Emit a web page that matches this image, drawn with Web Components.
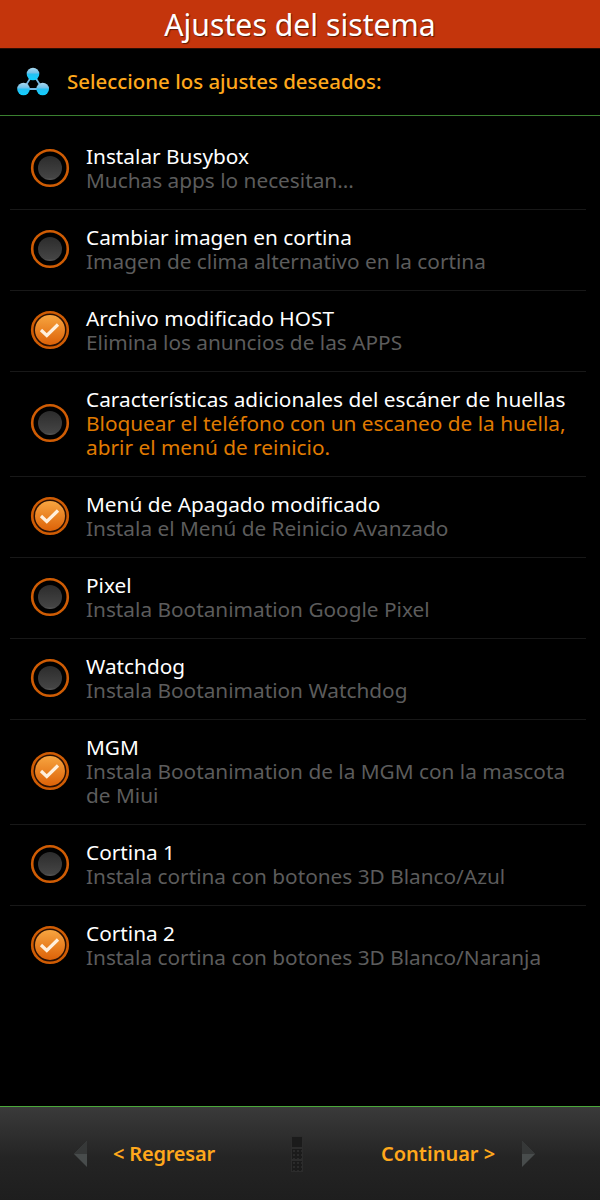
<!DOCTYPE html>
<html>
<head>
<meta charset="utf-8">
<style>
  html, body { margin: 0; height: 100%; background: #000; }
  body { font-family: "Noto Sans", "Open Sans", sans-serif; }
</style>
</head>
<body>
<setup-screen>
  <title-bar slot="title">Ajustes del sistema</title-bar>
  <sub-header slot="sub">Seleccione los ajustes deseados:</sub-header>
  <option-item title="Instalar Busybox">Muchas apps lo necesitan...</option-item>
  <option-item title="Cambiar imagen en cortina">Imagen de clima alternativo en la cortina</option-item>
  <option-item title="Archivo modificado HOST" checked>Elimina los anuncios de las APPS</option-item>
  <option-item title="Características adicionales del escáner de huellas" warn>Bloquear el teléfono con un escaneo de la huella, abrir el menú de reinicio.</option-item>
  <option-item title="Menú de Apagado modificado" checked>Instala el Menú de Reinicio Avanzado</option-item>
  <option-item title="Pixel">Instala Bootanimation Google Pixel</option-item>
  <option-item title="Watchdog">Instala Bootanimation Watchdog</option-item>
  <option-item title="MGM" checked>Instala Bootanimation de la MGM con la mascota de Miui</option-item>
  <option-item title="Cortina 1">Instala cortina con botones 3D Blanco/Azul</option-item>
  <option-item title="Cortina 2" checked last>Instala cortina con botones 3D Blanco/Naranja</option-item>
  <nav-bar slot="nav" back="&lt; Regresar" next="Continuar &gt;"></nav-bar>
</setup-screen>

<script>
class SetupScreen extends HTMLElement {
  constructor() {
    super();
    this.root = this.attachShadow({ mode: 'open' });
    this.root.innerHTML = `
      <style>
        :host { display: flex; flex-direction: column; height: 1200px; background: #000; }
        #list { flex: 1; display: flex; flex-direction: column; padding: 13px 14px 0 10px; }
      </style>
      <slot name="title"></slot>
      <slot name="sub"></slot>
      <div id="list"><slot></slot></div>
      <slot name="nav"></slot>
    `;
  }
}

class TitleBar extends HTMLElement {
  constructor() {
    super();
    this.root = this.attachShadow({ mode: 'open' });
    this.root.innerHTML = `
      <style>
        :host {
          display: flex; justify-content: center; align-items: center;
          height: 48px; border-bottom: 1px solid #2a0d04;
          background: #c4350c; color: #fff;
          font-size: 30.2px; text-shadow: 1px 1px 1px #5a1a05;
        }
      </style>
      <slot></slot>
    `;
  }
}

class SubHeader extends HTMLElement {
  constructor() {
    super();
    this.root = this.attachShadow({ mode: 'open' });
    this.root.innerHTML = `
      <style>
        :host {
          display: flex; align-items: center; gap: 16px;
          height: 66px; padding-left: 17px;
          border-bottom: 1px solid #3a8030;
          color: #ffa81c; font-size: 20.45px; font-weight: 500;
        }
        svg { width: 34px; height: 34px; flex: none; }
        span { padding-bottom: 2px; }
      </style>
      <svg viewBox="0 0 34 34">
        <defs>
          <linearGradient id="ball" x1="0" y1="0" x2="0" y2="1">
            <stop offset="0" stop-color="#a9d8ef"/>
            <stop offset=".42" stop-color="#6fc0e8"/>
            <stop offset=".5" stop-color="#25c0f2"/>
            <stop offset="1" stop-color="#10d0ff"/>
          </linearGradient>
        </defs>
        <path d="M16 9 L6.5 24 H25.7 Z" fill="none" stroke="#78b6e0" stroke-width="1.8"/>
        <circle cx="16" cy="9" r="6.3" fill="url(#ball)"/>
        <circle cx="6.5" cy="24" r="6.3" fill="url(#ball)"/>
        <circle cx="25.7" cy="24" r="6.3" fill="url(#ball)"/>
      </svg>
      <span><slot></slot></span>
    `;
  }
}

const itemTemplate = document.createElement('template');
itemTemplate.innerHTML = `
  <style>
    :host {
      display: flex; align-items: center;
      padding: 15px 0 17px; min-height: 48px;
      border-bottom: 1px solid #181818;
    }
    :host([last]) { border-bottom: none; }
    #check { flex: none; width: 40px; height: 40px; margin: 0 16px 0 20px; }
    #text { display: flex; flex-direction: column; line-height: 24px; font-size: 20.8px; min-width: 0; }
    #name { color: #fff; }
    #desc { color: #5c5c5c; }
    :host([warn]) #desc { color: #e07b00; }
  </style>
  <div id="check"></div>
  <div id="text">
    <div id="name"></div>
    <div id="desc"><slot></slot></div>
  </div>
`;

const OFF_ICON = `
  <svg viewBox="0 0 40 40" width="40" height="40">
    <defs>
      <linearGradient id="off" x1="0" y1="0" x2="0" y2="1">
        <stop offset="0" stop-color="#2c2c2c"/>
        <stop offset=".9" stop-color="#444"/>
        <stop offset="1" stop-color="#5a5a5a"/>
      </linearGradient>
    </defs>
    <circle cx="20" cy="20" r="17.8" fill="#000" stroke="#cf5c04" stroke-width="2.6"/>
    <circle cx="20" cy="20" r="12" fill="url(#off)"/>
  </svg>`;

const ON_ICON = `
  <svg viewBox="0 0 40 40" width="40" height="40">
    <defs>
      <linearGradient id="on" x1="0" y1="0" x2="0" y2="1">
        <stop offset="0" stop-color="#f7a540"/>
        <stop offset="1" stop-color="#dd6208"/>
      </linearGradient>
    </defs>
    <circle cx="20" cy="20" r="17.8" fill="#2a1003" stroke="#cf5c04" stroke-width="2.6"/>
    <circle cx="20" cy="20" r="15" fill="url(#on)"/>
    <path d="M11 20 L16.8 25.5 L28 14.5" fill="none" stroke="#fff0dd" stroke-width="3.2"/>
  </svg>`;

class OptionItem extends HTMLElement {
  constructor() {
    super();
    this.root = this.attachShadow({ mode: 'open' });
    this.root.appendChild(itemTemplate.content.cloneNode(true));
  }

  connectedCallback() {
    this.root.querySelector('#name').innerText = this.getAttribute('title');
    this.root.querySelector('#check').innerHTML = this.hasAttribute('checked') ? ON_ICON : OFF_ICON;
    this.removeAttribute('title');
  }
}

class NavBar extends HTMLElement {
  constructor() {
    super();
    this.root = this.attachShadow({ mode: 'open' });
    this.root.innerHTML = `
      <style>
        :host {
          display: grid; grid-template-columns: 279px 36px 1fr; align-items: center;
          height: 93px; border-top: 1px solid #4aa83a;
          background: linear-gradient(#3a3a3a, #242424 55%, #1e1e1e);
          color: #ffa81c; font-size: 20px; font-weight: 600;
        }
        .side { display: flex; align-items: center; }
        #back { justify-content: flex-end; gap: 26px; padding-right: 64px; }
        #back .label { letter-spacing: -.2px; }
        #next { justify-content: flex-start; gap: 27px; padding-left: 66px; }
        .label { white-space: nowrap; }
        svg { width: 14px; height: 26px; flex: none; }
        #handle { display: flex; flex-direction: column; gap: 2px; align-items: center; }
        #handle i { display: block; width: 10px; height: 10px; background-color: #1b1b1b; outline: 1px solid #2c2c2c; }
        #handle i + i { background-image: radial-gradient(#2a2a2a 1px, transparent 1.2px); background-size: 4px 4px; }
      </style>
      <div class="side" id="back">
        <svg viewBox="0 0 14 26"><path d="M14 0 V26 L1 13 Z" fill="#484c4c"/><path d="M14 0 V13 H1 Z" fill="#363838"/></svg>
        <span class="label"></span>
      </div>
      <div id="handle"><i></i><i></i><i></i></div>
      <div class="side" id="next">
        <span class="label"></span>
        <svg viewBox="0 0 14 26"><path d="M0 0 V26 L13 13 Z" fill="#484c4c"/><path d="M0 0 V13 H13 Z" fill="#363838"/></svg>
      </div>
    `;
  }

  connectedCallback() {
    this.root.querySelector('#back .label').textContent = this.getAttribute('back');
    this.root.querySelector('#next .label').textContent = this.getAttribute('next');
  }
}

customElements.define('setup-screen', SetupScreen);
customElements.define('title-bar', TitleBar);
customElements.define('sub-header', SubHeader);
customElements.define('option-item', OptionItem);
customElements.define('nav-bar', NavBar);
</script>
</body>
</html>
